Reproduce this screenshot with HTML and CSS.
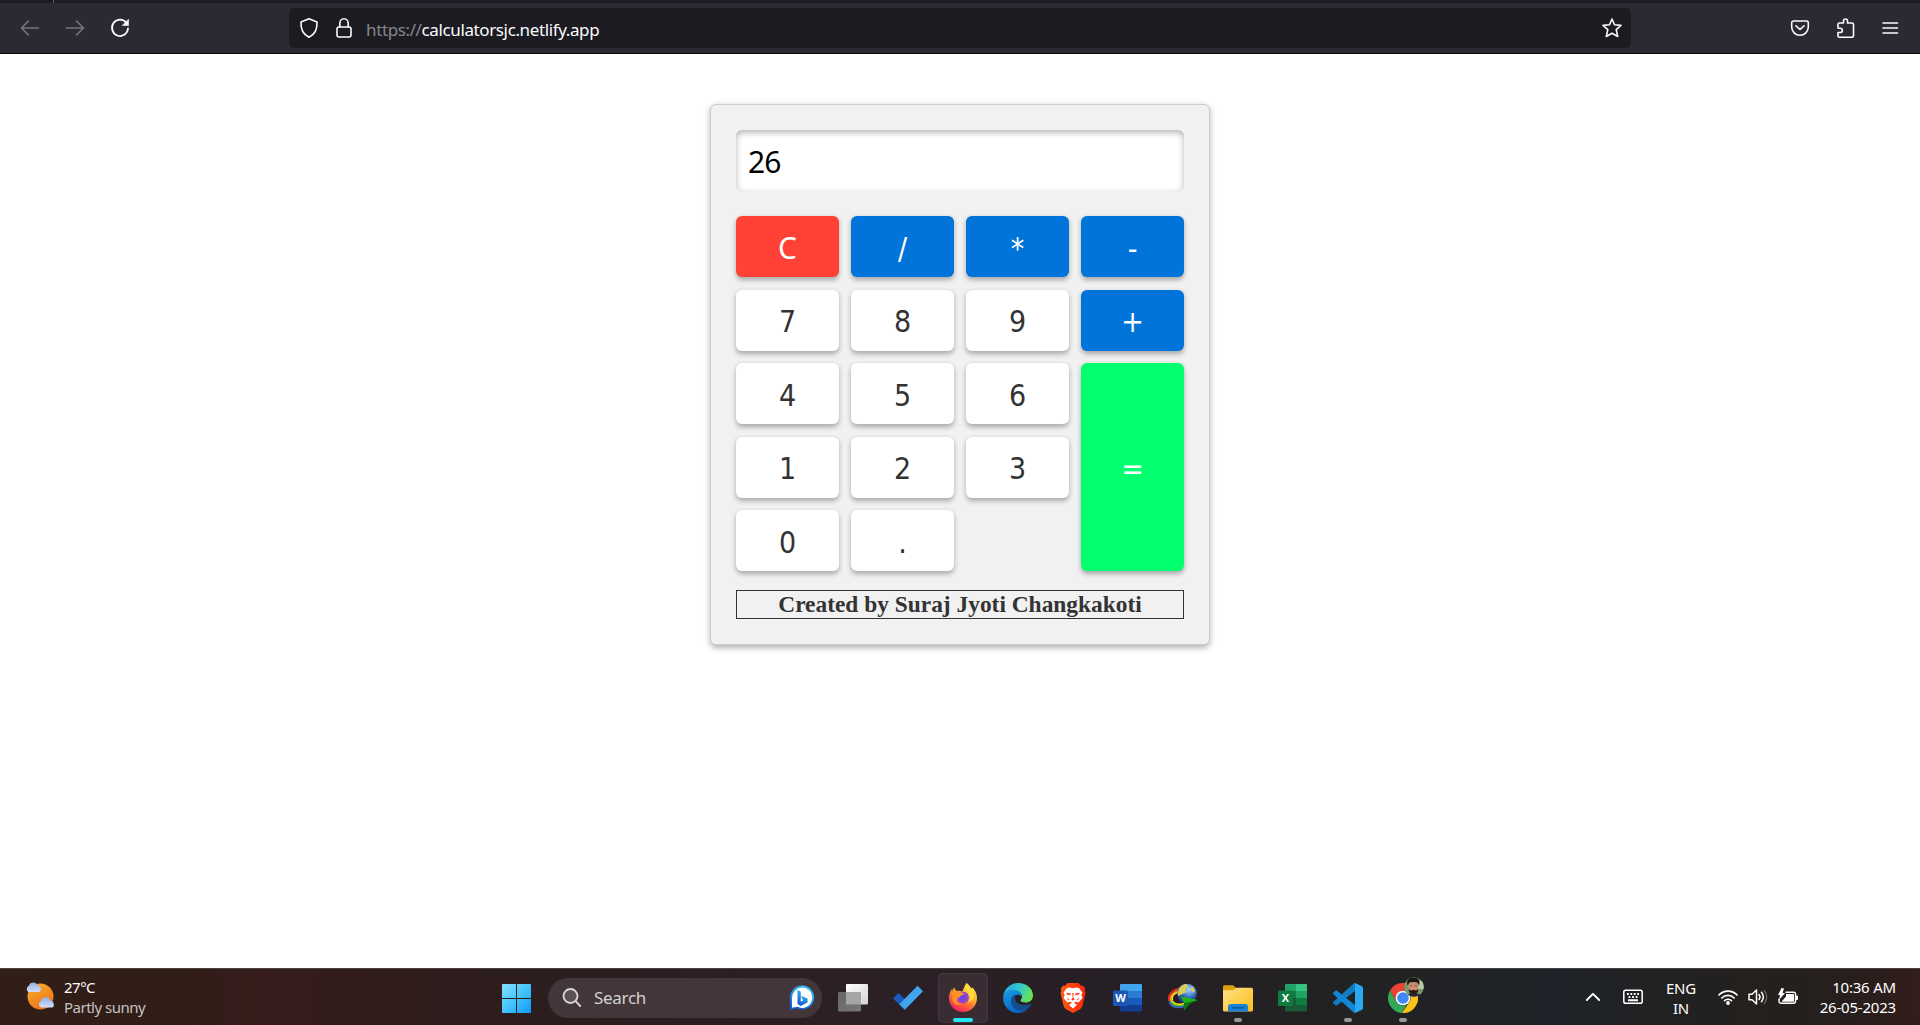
FILE: index.html
```html
<!DOCTYPE html>
<html lang="en">
<head>
<meta charset="utf-8">
<title>Calculator</title>
<link rel="stylesheet" href="styles.css">
</head>
<body>
<header class="browser">
  <div class="tabstrip"><span class="tab-edge"></span></div>
  <div class="toolbar">
    <nav class="nav">
      <svg class="dim" width="20" height="20" viewBox="0 0 20 20"><path d="M18.500 10H1.500M8.500 3L1.500 10L8.500 17"/></svg>
      <svg class="dim" width="20" height="20" viewBox="0 0 20 20"><path d="M1.500 10h17M11.500 3l7 7l-7 7"/></svg>
      <svg class="reload" width="20" height="20" viewBox="0 0 20 20"><path d="M16.500 5A8 8.200 0 1 0 18 10.500"/><path class="solid" d="M18.500 1.500v6h-6z"/></svg>
    </nav>
    <div class="urlbar">
      <svg width="20" height="22" viewBox="0 0 20 22"><path d="M10 1.800L18 5c.4 7-2.200 12.500-8 15.200C4.200 17.500 1.600 12 2 5z"/></svg>
      <svg class="lock" width="18" height="22" viewBox="0 0 18 22"><path d="M4.800 10V6.200a4.200 4.500 0 0 1 8.400 0V10"/><rect x="2" y="10" width="14" height="10" rx="2"/></svg>
      <span class="url"><span class="scheme">https://</span>calculatorsjc.netlify.app</span>
      <svg class="star" width="22" height="22" viewBox="0 0 22 22"><path d="M11 2l2.500 5.700 6.500.7-4.800 4.300 1.500 6.800-5.700-3.200-5.700 3.200 1.500-6.800L2 8.400l6.500-.7z"/></svg>
    </div>
    <div class="tools">
      <svg width="20" height="20" viewBox="0 0 20 20"><path d="M3.500 3h13a1.800 1.800 0 0 1 1.800 1.800V9a8.300 8.300 0 0 1-16.600 0V4.800A1.800 1.800 0 0 1 3.500 3zM6 7.800l4 3.700 4-3.700"/></svg>
      <svg width="20" height="22" viewBox="0 0 20 22"><path d="M3 6H7.500V4a2 2 0 0 1 4 0v2H16a1.500 1.500 0 0 1 1.500 1.500v11.200a1.500 1.500 0 0 1-1.500 1.500H3.500A1.500 1.500 0 0 1 2 18.700V15.500h2.200a2 2 0 0 0 0-4.200H2V7z"/></svg>
      <svg width="18" height="20" viewBox="0 0 18 20"><path d="M1 5h14.500M1 10h14.500M1 15h14.500"/></svg>
    </div>
  </div>
</header>

<main class="page">
  <section class="calculator">
    <div class="display">26</div>
    <div class="keys">
      <button class="key clear">C</button>
      <button class="key operator">/</button>
      <button class="key operator">*</button>
      <button class="key operator">-</button>
      <button class="key">7</button>
      <button class="key">8</button>
      <button class="key">9</button>
      <button class="key operator">+</button>
      <button class="key">4</button>
      <button class="key">5</button>
      <button class="key">6</button>
      <button class="key equals">=</button>
      <button class="key">1</button>
      <button class="key">2</button>
      <button class="key">3</button>
      <button class="key">0</button>
      <button class="key">.</button>
    </div>
    <div class="credit"><span>Created by Suraj Jyoti Changkakoti</span></div>
  </section>
</main>

<footer class="taskbar">
  <div class="weather">
    <svg width="32" height="32" viewBox="0 0 32 32">
      <defs>
        <linearGradient id="sun" x1="0" y1="0" x2=".6" y2="1"><stop offset="0" stop-color="#f3b52c"/><stop offset="1" stop-color="#f2701b"/></linearGradient>
        <linearGradient id="cloud" x1="0" y1="0" x2="0" y2="1"><stop offset="0" stop-color="#8fb0ee"/><stop offset="1" stop-color="#d3def5"/></linearGradient>
      </defs>
      <circle cx="16.500" cy="16.500" r="13" fill="url(#sun)"/>
      <path d="M4.500 12a3.600 3.600 0 0 1 .5-6.400 4.500 4.500 0 0 1 8.500 0 3.500 3.500 0 0 1 2 6.400z" fill="url(#cloud)"/>
      <path d="M17 27.500a3.600 3.600 0 0 1 0-6.500 4.800 4.800 0 0 1 9.200-.5 4 4 0 0 1 2.300 7z" fill="url(#cloud)"/>
    </svg>
    <div class="weather-text"><span>27°C</span><span class="condition">Partly sunny</span></div>
  </div>

  <div class="apps">
    <svg class="windows" width="30" height="30" viewBox="0 0 30 30">
      <defs><linearGradient id="win" gradientUnits="userSpaceOnUse" x1="0" y1="0" x2="30" y2="30"><stop offset="0" stop-color="#86e0ff"/><stop offset=".5" stop-color="#43c4fc"/><stop offset="1" stop-color="#0b94f6"/></linearGradient></defs>
      <path fill="url(#win)" d="M1 0h13v14H0V1a1 1 0 0 1 1-1zM15 0h13a1 1 0 0 1 1 1v13H15zM0 15h14v14H1a1 1 0 0 1-1-1zM15 15h14v13a1 1 0 0 1-1 1H15z"/>
    </svg>
    <div class="search">
      <svg width="20" height="20" viewBox="0 0 20 20" fill="none" stroke="#d8d4d6" stroke-width="1.900" stroke-linecap="round"><circle cx="8.500" cy="8" r="7" fill="#5b5055"/><path d="M13.600 13.200l4.600 4.800"/></svg>
      <span>Search</span>
      <svg class="bing" width="26" height="26" viewBox="0 0 26 26">
        <defs><linearGradient id="bing" x1=".7" y1="0" x2=".3" y2="1"><stop offset="0" stop-color="#31c3ee"/><stop offset="1" stop-color="#1457d8"/></linearGradient></defs>
        <path fill="url(#bing)" d="M13 .5a12 12 0 1 1-5 22.800L1 25.300V13A12 12 0 0 1 13 .5z"/>
        <path fill="#fff" d="M13 2.500a10.200 10.200 0 1 1-4.500 19.300L3 22.800V13A10.200 10.200 0 0 1 13 2.500z"/>
        <path fill="url(#bing)" d="M8.500 5l3.300 1.500v10.300l3-1.800-1.500-.8-1.200-3.200 6.500 2.500v4l-6.800 3.500-3.300-2z"/>
      </svg>
    </div>
    <div class="app">
      <svg width="30" height="30" viewBox="0 0 30 30">
        <defs><linearGradient id="tv" x1="0" y1="0" x2="1" y2="1"><stop offset="0" stop-color="#fff"/><stop offset="1" stop-color="#d4d4d4"/></linearGradient><linearGradient id="tvb" x1="0" y1="0" x2="1" y2="1"><stop offset="0" stop-color="#666"/><stop offset="1" stop-color="#777"/></linearGradient></defs>
        <rect x="8" y="1" width="22" height="20.500" rx="1" fill="url(#tv)"/><rect x="0" y="9" width="23" height="19.500" rx="1" fill="url(#tvb)"/><path d="M8 9h15v12.500H8z" fill="#a6a6a6"/>
      </svg>
    </div>
    <div class="app">
      <svg width="30" height="30" viewBox="0 0 30 30"><path fill="#185abd" d="M0 15.500L5.500 10l8.300 8.300-2 8.500z"/><path fill="#41a5ee" d="M24.500 2.800L30 8.300 11.800 26.800l-5.500-5.500z"/></svg>
    </div>
    <div class="app active">
      <svg width="30" height="30" viewBox="0 0 30 30">
        <defs>
          <linearGradient id="fx" x1=".8" y1="0" x2=".25" y2="1"><stop offset="0" stop-color="#fff04a"/><stop offset=".35" stop-color="#ffbd2f"/><stop offset=".65" stop-color="#ff6a34"/><stop offset="1" stop-color="#f1186b"/></linearGradient>
          <radialGradient id="fxg"><stop offset="0" stop-color="#6747dc"/><stop offset=".6" stop-color="#8146de"/><stop offset="1" stop-color="#b53ec0"/></radialGradient>
        </defs>
        <path fill="url(#fx)" d="M18.500 0c2 1.800 3.600 3.300 4.500 5.500.700-.2 1-.600 1.200-1.300C27.500 7.500 29 11 29 15c0 8-6.200 14-14 14S1 23 1 15c0-3.500 1-6.500 3.300-9.500L4.800 8.500 6 4.200l2.500 4c2-.7 4-.3 5.500.5C15.500 7 16 3.200 18.500 0z"/>
        <circle cx="14.800" cy="14.500" r="6" fill="url(#fxg)"/>
        <path fill="#ff9226" d="M4.500 9.500c3-2 6.500-1.300 8.800-.2l2.700 1.200c-.5 1.600-2 2-3.500 2.400-1 1.500-2.500 1.500-3.600 3-.8 3 2.200 5.600 5.800 4.800-5 3.500-11 0-10.200-6z"/>
        <path fill="#ffdc3e" d="M18.500 0c-1.500 3-1 6 1.500 9 2.300 3 3 7-.3 11C27 17 28 11 23 5.500 22 3 20.300 1.500 18.500 0z"/>
      </svg>
      <i class="bar"></i>
    </div>
    <div class="app">
      <svg width="30" height="30" viewBox="0 0 30 30">
        <defs>
          <linearGradient id="ed1" x1="0" y1=".2" x2="1" y2=".5"><stop offset="0" stop-color="#2b9fe6"/><stop offset=".5" stop-color="#32c9cf"/><stop offset="1" stop-color="#6be34c"/></linearGradient>
          <linearGradient id="ed2" x1="0" y1="0" x2=".5" y2="1"><stop offset="0" stop-color="#189bdd"/><stop offset="1" stop-color="#0867c9"/></linearGradient>
        </defs>
        <path fill="url(#ed1)" d="M.3 13C1.300 5.500 7.500 0 15 0c8.500 0 15 5.500 15 12.500 0 4.500-3.300 7-7.500 7-3.500 0-5-1.200-5-2.200 0-.8 1.500-1.300 1.500-4C19 9.500 14 7.500 10 7.500c-4.500 0-8 2.500-9.700 5.500z"/>
        <path fill="url(#ed2)" d="M.2 14C1 9.500 5 6.800 9.500 6.800c5 0 9.500 2.700 9.500 6.700-1-1-2.500-1.800-4-1.800-3.500 0-5 3-5 5.800 0 5 5 8.500 10 8.500l3 1.500C20.500 29.200 18 30 15 30 6.500 30-.5 23 .2 14z"/>
        <path fill="#114f8e" d="M8 18c0-3.500 2-5.800 4.500-6.500C11 15 12 19 16 21c4 2 8.500 1 11.300-.3.500-.2 1 .2.700.8-1.500 3-4 5.500-7.500 7C14 28.500 8 24.500 8 18z"/>
      </svg>
    </div>
    <div class="app">
      <svg width="30" height="30" viewBox="0 0 30 30">
        <defs><linearGradient id="br" x1="0" y1="0" x2="1" y2="0"><stop offset="0" stop-color="#ff5a14"/><stop offset="1" stop-color="#ff2508"/></linearGradient></defs>
        <path fill="url(#br)" d="M9.500 0h11l2.300 2.700 2-.3L27.300 5.500l-.7 2L27.500 10l-3 12.500c-.5 2-1.500 3-3 4L15 30l-6.500-3.500c-1.500-1-2.500-2-3-4L2.500 10l.9-2.500-.7-2L5.200 2.400l2 .3z"/>
        <path fill="#fff" d="M11.500 4.500l3.500.8 3.500-.8 2.500.5 3.500 4.500-1.200 2.500 1.200 3-4 4.500-2.500-.8-2 1 3 2.300-4 3.500-4-3.500 3-2.300-2-1-2.500.8-4-4.500 1.200-3-1.200-2.500L9 5z"/>
        <path fill="#ff3b12" d="M8.500 9.800l4.500.8-.6 1.600-3.500-.8zM21.500 9.800l-4.500.8.6 1.600 3.500-.8zM14.300 10h1.400l-.4 4.500 1.500 2-1.800 1-1.800-1 1.500-2zM8.500 14.500l2.800 2-.6 1.300zM21.500 14.500l-2.800 2 .6 1.300z"/>
      </svg>
    </div>
    <div class="app">
      <svg width="30" height="30" viewBox="0 0 30 30">
        <path fill="#41a5ee" d="M8 1h20a1 1 0 0 1 1 1v6H7V2a1 1 0 0 1 1-1z"/><path fill="#2b7cd3" d="M7 8h22v7H7z"/><path fill="#185abd" d="M7 15h22v7H7z"/><path fill="#103f91" d="M7 22h22v5.500a1 1 0 0 1-1 1H8a1 1 0 0 1-1-1z"/>
        <rect y="7.500" width="15" height="15.500" rx="1.200" fill="#1b56b5"/><text class="badge" x="7.500" y="19" text-anchor="middle">W</text>
      </svg>
    </div>
    <div class="app">
      <svg width="30" height="30" viewBox="0 0 30 30">
        <defs><radialGradient id="globe" cx=".6" cy=".3"><stop offset="0" stop-color="#a9d2ff"/><stop offset=".5" stop-color="#5b97dd"/><stop offset="1" stop-color="#204fa0"/></radialGradient></defs>
        <g fill="none" stroke-width="1.700">
          <path stroke="#e8261d" d="M13 5C4 6.500-.5 12 1 18"/>
          <path stroke="#f58b1c" d="M13 6.500C6 8 1.500 12.500 2.500 18"/>
          <path stroke="#ffe128" d="M13 8C7 9.500 3.200 13 4 17.500c1 3.500 6 5 12 3"/>
          <path stroke="#4fc41f" d="M2.500 18c1.500 4.500 8 6 13.500 4"/>
          <path stroke="#3b62cf" d="M1.200 18.500C3 24.500 10 25.500 16 23.500"/>
        </g>
        <circle cx="19" cy="10.500" r="9.800" fill="url(#globe)"/>
        <path fill="#d8cc59" d="M10.500 6.500c2-4 5-5.500 8-5.500l2 3-3 2 1 3-4 2-4 2-1-2zM22 5l3-1 2 4-2 2z"/>
        <path fill="#21b51a" d="M12.500 13.200L30 17l-7.500 3-6.500 7.300.5-7.300z"/><path fill="#0b760c" d="M16.500 20L30 17l-7.500 3-6.500 7.300z"/>
      </svg>
    </div>
    <div class="app">
      <svg width="30" height="30" viewBox="0 0 30 30">
        <defs><linearGradient id="fold" x1="0" y1="0" x2="1" y2="1"><stop offset="0" stop-color="#ffe28a"/><stop offset="1" stop-color="#fbbd17"/></linearGradient></defs>
        <path fill="#dea00b" d="M1.500 2.200h8.500l4 3.500V10H0V3.700a1.500 1.500 0 0 1 1.500-1.500z"/><path fill="url(#fold)" d="M0 7.200h10l3.500-2.400h15A1.500 1.500 0 0 1 30 6.300V27a1.500 1.500 0 0 1-1.500 1.500h-27A1.500 1.500 0 0 1 0 27z"/>
        <path fill="#1683d4" d="M8 21h14a3 3 0 0 1 3 3v4.500H5V24a3 3 0 0 1 3-3z"/><path stroke="#0c4f91" stroke-width="1.300" stroke-linecap="round" d="M9 24.800h12"/>
      </svg>
      <i class="dot"></i>
    </div>
    <div class="app">
      <svg width="30" height="30" viewBox="0 0 30 30">
        <path fill="#21a366" d="M8 1h10v7H7V2a1 1 0 0 1 1-1z"/><path fill="#33c481" d="M18 1h10a1 1 0 0 1 1 1v6H18z"/><path fill="#107c41" d="M7 8h11v7H7z"/><path fill="#21a366" d="M18 8h11v7H18z"/><path fill="#185c37" d="M7 15h11v7H7z"/><path fill="#107c41" d="M18 15h11v7H18z"/><path fill="#185c37" d="M7 22h22v5.500a1 1 0 0 1-1 1H8a1 1 0 0 1-1-1z"/>
        <rect y="7.500" width="15" height="15.500" rx="1.200" fill="#117a41"/><text class="badge" x="7.500" y="19" text-anchor="middle">X</text>
      </svg>
    </div>
    <div class="app">
      <svg width="30" height="30" viewBox="0 0 30 30">
        <path fill="#0f7bc4" d="M22 0v8L4 22.300a1.200 1.200 0 0 1-1.600 0L.4 20.500a1.200 1.200 0 0 1 0-1.800L20.500.7z"/><path fill="#1187d6" d="M22 30v-8L4 7.700a1.200 1.200 0 0 0-1.600 0L.4 9.500a1.200 1.200 0 0 0 0 1.800l20.100 18z"/><path fill="#2aa8f4" d="M22 0l7 3.300a2 2 0 0 1 1 1.700v20a2 2 0 0 1-1 1.700L22 30c-.8.300-1.500 0-2-.6.900.900 2 .4 2-.8V1.400c0-1.200-1.100-1.700-2-.8.500-.6 1.200-.9 2-.6z"/>
      </svg>
      <i class="dot"></i>
    </div>
    <div class="app">
      <svg width="30" height="30" viewBox="0 0 30 30">
        <path fill="#ea4335" d="M2 7.500A15 15 0 0 1 28 7.500H15L8.500 18.700z"/><path fill="#34a853" d="M2 7.500l6.500 11.300A7.500 7.500 0 0 0 15 22.500l3.500-.8L14 30A15 15 0 0 1 2 7.500z"/><path fill="#fbc116" d="M28 7.500A15 15 0 0 1 14 30l7.500-11.200A7.500 7.500 0 0 0 15 7.500z"/><circle cx="15" cy="15" r="7.300" fill="#fff"/><circle cx="15" cy="15" r="5.800" fill="#4285f4"/>
      </svg>
      <svg class="avatar" width="20" height="20" viewBox="0 0 20 20">
        <defs><clipPath id="round"><circle cx="10" cy="10" r="9.800"/></clipPath></defs>
        <g clip-path="url(#round)"><path fill="#78986a" d="M0 0h20v20H0z"/><path fill="#b8c8a9" d="M14 4h6v8h-6z"/><path fill="#222b40" d="M2 20c0-2.500 3-3.500 8-3.500s8 1 8 3.500z"/><ellipse cx="9.500" cy="10.500" rx="5" ry="6.800" fill="#c88f72"/><path fill="#1b1613" d="M3.500 8.500C2 3 5 .5 9.500.5c5 0 7 3 5.500 8l-1.500-3c-3-.8-6-.6-8 0z"/><path fill="#8a5a47" d="M6 8.300h2.500v1H6zM10.500 8.300H13v1h-2.500z"/><path fill="#2b1b17" d="M4.700 12l2 1.500 2.800-.8 2.800.8 2-1.500c0 3.500-2 5.800-4.800 5.800S4.700 15.500 4.700 12z"/></g>
      </svg>
      <i class="dot"></i>
    </div>
  </div>

  <div class="tray">
    <svg width="16" height="12" viewBox="0 0 16 12"><path d="M1.800 9L8 2.800 14.200 9" stroke-width="1.900"/></svg>
    <svg class="keyboard" width="20" height="16" viewBox="0 0 20 16"><rect x=".8" y="1.300" width="18.400" height="13" rx="1.800" stroke-width="1.500"/><path d="M4 5h1.800M7.400 5h1.800M10.800 5h1.800M14.200 5H16M5.500 8h1.800M9.100 8h1.800M12.700 8h1.800M5 11.300h10" stroke-width="1.900" stroke-linecap="butt"/></svg>
    <div class="lang"><span>ENG</span><span>IN</span></div>
    <svg class="wifi" width="20" height="18" viewBox="0 0 20 18"><path d="M1 7a12.500 12.500 0 0 1 18 0M3.800 10a8.700 8.700 0 0 1 12.400 0M6.500 12.700a5 5 0 0 1 7 0" stroke-width="1.700"/><circle cx="10" cy="15" r="1.900" class="solid"/></svg>
    <svg class="speaker" width="20" height="18" viewBox="0 0 20 18"><path d="M1 6.300h3L8.500 2v14L4 11.700H1z" stroke-width="1.500"/><path d="M11 6.500c1.200 1.500 1.200 3.500 0 5M13.500 4.300c2.200 2.800 2.200 6.600 0 9.400" stroke-width="1.500"/><path d="M16.200 2.300c3.300 4 3.300 9.400 0 13.400" stroke-width="1.300" stroke="#666"/></svg>
    <svg class="battery" width="20" height="18" viewBox="0 0 20 18"><path d="M8 4.300h7.500a2 2 0 0 1 2 2v7a2 2 0 0 1-2 2H3a2 2 0 0 1-2-2v-2" stroke-width="1.400"/><path class="solid" d="M8 6h7.300a.7.700 0 0 1 .7.700v6.300a.7.700 0 0 1-.7.700H3.500L8 8.500zM18 7.500h1.200a.8.800 0 0 1 .8.800v3a.8.800 0 0 1-.8.800H18zM3.500 0L0 7h2L1 12l6-7H4.500L6 .5z"/></svg>
    <div class="clock"><span>10:36 AM</span><span>26-05-2023</span></div>
  </div>
</footer>
</body>
</html>
```
FILE: styles.css
```css
* { box-sizing: border-box; }

body {
  margin: 0;
  height: 1025px;
  display: flex;
  flex-direction: column;
  background: #fff;
  font-family: "Noto Sans", "Open Sans", sans-serif;
  overflow: hidden;
}

svg { display: block; flex: none; }

/* Browser chrome */
.browser { height: 54px; flex: none; border-bottom: 1px solid #0c0c0d; background: #2b2a33; }
.tabstrip { height: 3px; background: #1c1b22; padding-left: 53px; }
.tab-edge { display: block; width: 1px; height: 3px; background: #5b5b66; }
.toolbar { height: 50px; display: flex; align-items: center; }
.browser svg { fill: none; stroke: #fbfbfe; stroke-width: 1.6; stroke-linecap: round; stroke-linejoin: round; }
.browser .dim { stroke: #77767d; }
.browser .solid { fill: #fbfbfe; stroke-width: 0.6; }
.browser .reload { stroke-width: 1.8; }
.nav { width: 289px; padding-left: 20px; display: flex; gap: 25px; }
.urlbar {
  width: 1342px;
  height: 40px;
  padding: 0 8px 0 10px;
  display: flex;
  align-items: center;
  border-radius: 5px;
  background: #1c1b22;
}
.lock { margin-left: 16px; }
.url { margin-left: 13px; padding-top: 3px; color: #fbfbfe; font-size: 17px; line-height: 24px; letter-spacing: -0.38px; white-space: nowrap; }
.scheme { color: #87868c; }
.star { margin-left: auto; }
.tools { display: flex; align-items: center; margin-left: 159px; gap: 26px; }

/* Calculator */
.page { flex: 1; padding-top: 50px; display: flex; justify-content: center; align-items: flex-start; }
.calculator {
  width: 500px;
  height: 541px;
  padding: 25px;
  border: 1px solid #ccc;
  border-radius: 6px;
  background: #f1f1f1;
  box-shadow: 0 2.5px 6px rgba(0, 0, 0, 0.3);
}
.display {
  height: 61px;
  padding-left: 12px;
  border-radius: 6px;
  background: #fff;
  box-shadow: inset 0 2.5px 6px rgba(0, 0, 0, 0.3);
  color: #000;
  font: 30px/63px "Noto Sans", sans-serif;
  letter-spacing: -0.8px;
}
.keys {
  margin-top: 25px;
  display: grid;
  grid-template-columns: repeat(4, 103px);
  grid-auto-rows: 61px;
  gap: 12.5px 12px;
}
.key {
  padding: 4px 0 0;
  border: 0;
  border-radius: 6px;
  background: #fff;
  box-shadow: 0 2.5px 5px rgba(0, 0, 0, 0.3);
  color: #333;
  font: 30px/36px "DejaVu Sans Condensed", "DejaVu Sans", sans-serif;
  font-stretch: condensed;
}
.clear { padding-top: 3px; background: #ff4136; color: #fff; font-family: "Noto Sans", sans-serif; }
.operator { background: #0074d9; color: #fff; }
.equals { grid-column: 4; grid-row: 3 / span 3; background: #01ff70; color: #fff; }
.credit {
  margin-top: 19px;
  height: 29px;
  border: 1px solid #333;
  color: #333;
  font: bold 23.4px/27px "Liberation Serif", serif;
  text-align: center;
  white-space: nowrap;
}

/* Taskbar */
.taskbar {
  height: 57px;
  flex: none;
  display: flex;
  align-items: stretch;
  border-top: 1px solid #4a4142;
  background: linear-gradient(90deg, #301e17 0, #311d18 180px, #351c1a 260px, #2d1d1d 480px, #2b2025 900px, #251f25 1150px, #222221 1330px, #1f2329 1560px, #22211f 1700px, #261f1d 1840px, #321d1b 1920px);
  color: #fff;
  font-size: 15px;
  line-height: 20px;
}
.weather { width: 500px; padding-left: 24px; display: flex; gap: 8px; }
.weather svg { margin-top: 11px; }
.weather-text { padding-top: 8px; display: flex; flex-direction: column; letter-spacing: -0.5px; }
.condition { color: #c9c2c0; }
.apps { display: flex; align-items: center; }
.windows { margin: 3px 0 0 2px; }
.search {
  width: 274px;
  height: 40px;
  margin: 1px 12px 0 16px;
  padding: 0 7px 0 14px;
  display: flex;
  align-items: center;
  border-radius: 20px;
  background: #43363a;
  color: #d5d0d2;
  font-size: 17px;
}
.search span { margin-left: 12px; padding-top: 1px; letter-spacing: -0.3px; }
.bing { margin-left: auto; }
.app {
  position: relative;
  width: 50px;
  height: 50px;
  margin: 1px 5px 0 0;
  display: flex;
  align-items: center;
  justify-content: center;
}
.app:nth-child(3) { margin-left: -6px; }
.active { border-radius: 5px; background: #392c33; box-shadow: inset 0 0 0 1px #443840; }
.bar, .dot { position: absolute; bottom: 1px; height: 4px; border-radius: 2px; }
.bar { left: 15px; width: 20px; background: #23e5f4; }
.dot { left: 21px; width: 8px; background: #99979a; }
.avatar { position: absolute; left: 26px; top: 4px; }
.badge { fill: #fff; font: bold 11px "Open Sans", sans-serif; }
.tray { margin-left: auto; padding-right: 24px; display: flex; align-items: center; letter-spacing: -0.2px; }
.tray svg { fill: none; stroke: #fff; stroke-linecap: round; stroke-linejoin: round; }
.tray .solid { fill: #fff; stroke: none; }
.keyboard { margin-left: 22px; }
.lang { width: 36px; margin-left: 20px; display: flex; flex-direction: column; text-align: center; padding-top: 2px; }
.wifi { margin-left: 19px; }
.speaker { margin-left: 10px; }
.battery { margin-left: 10px; }
.clock { width: 84px; margin-left: 14px; display: flex; flex-direction: column; text-align: right; white-space: nowrap; }
```
